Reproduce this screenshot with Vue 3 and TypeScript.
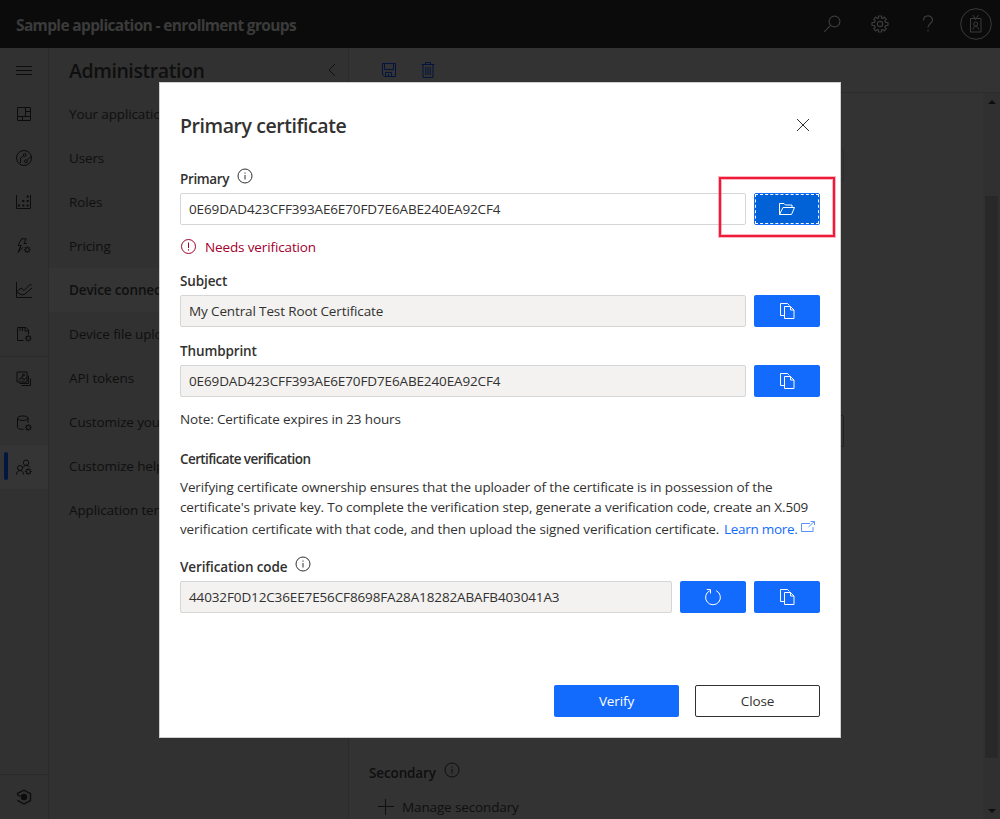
<script setup lang="ts">
interface RailIcon {
  name: string
  d: string
  fill?: string
  gear?: [number, number]
  divider?: boolean
  active?: boolean
}

const rail: RailIcon[] = [
  { name: 'dashboard', d: 'M1.5 1.5h13v13h-13zM1.5 10.5h13M9.5 1.5v9M9.5 5.5h5M6.5 10.5v4' },
  {
    name: 'devices',
    d: 'M8 .5a7.5 7.5 0 1 0 0 15a7.5 7.5 0 1 0 0-15M8.7 3.6a1.4 1.4 0 1 0 0 2.8a1.4 1.4 0 1 0 0-2.8M10 9.8a1.5 1.5 0 1 0 0 3a1.5 1.5 0 1 0 0-3M7.5 6L4.5 8.3V13M11.2 10L15 6.5',
  },
  {
    name: 'metrics',
    d: 'M.5 1v13.5h14V1',
    fill: 'M2 10.5h2v2h-2zM6.3 10.5h2v2h-2zM10.7 10.5h2v2h-2zM6.3 6h2v2h-2zM10.7 6h2v2h-2zM10.7 1.5h2v2h-2z',
  },
  { name: 'rules', d: 'M8 5.500h3M5.500.8h4.700L8 5.500M5.500.8L2 7.500h3L2 14.500l5-5.200M5 7.500L3 12', gear: [11.3, 11.7] },
  { name: 'analytics', d: 'M.5 0v15.5H16M1 9.500L5 6l3 2.500L14.500 2l1.500 1.500M1 10.500l5 2.500 3-1 7-6' },
  { name: 'jobs', d: 'M7.5 14.5h-6v-13H10L12.5 4v4.5M4 2v3M6.5 2v3M9 2v3h3', gear: [12.3, 12.3], divider: true },
  {
    name: 'templates',
    d: 'M1 1h10v10H1zM12.5 4.5v8h-9M14.5 7.5v7h-9M3 9.5l2-3 2-2M7.5 3a1 1 0 1 0 0 2a1 1 0 1 0 0-2M5 7h2v2.5M8 9l3-3',
  },
  {
    name: 'export',
    d: 'M1.5 3.2c0-3 10.5-3 10.5 0s-10.5 3-10.5 0v9c0 1.5 3 2.3 6 2.2M12 3.2v4.500',
    gear: [12.3, 12.5],
  },
  {
    name: 'administration',
    d: 'M10 1a2.7 2.7 0 1 0 0 5.4a2.7 2.7 0 1 0 0-5.4M4 6.5a2.5 2.5 0 1 0 0 5a2.5 2.5 0 1 0 0-5M.5 15.5c0-5.3 7-5.3 7 0M7 8.5c1-2.5 5.5-2.7 7-.3',
    gear: [12.3, 12.5],
    active: true,
  },
]

const sections: { label: string; active?: boolean }[] = [
  { label: 'Your application' },
  { label: 'Users' },
  { label: 'Roles' },
  { label: 'Pricing' },
  { label: 'Device connect', active: true },
  { label: 'Device file upload' },
  { label: 'API tokens' },
  { label: 'Customize your' },
  { label: 'Customize help' },
  { label: 'Application tem' },
]

const thumbprint = '0E69DAD423CFF393AE6E70FD7E6ABE240EA92CF4'
const code = '44032F0D12C36EE7E56CF8698FA28A18282ABAFB403041A3'

const gearTeeth = [0, 45, 90, 135, 180, 225, 270, 315]
</script>

<template>
  <div class="app">
    <header class="top">
      <span class="top-title">Sample application - enrollment groups</span>
      <svg class="i18 search" viewBox="0 0 18 18"><circle cx="11.500" cy="6.500" r="5.400" /><path d="M7.600 10.400L1.200 16.800" /></svg>
      <svg class="i18 cog" viewBox="0 0 18 18">
        <path d="M7.500 1h3v2l1.200.5 1.500-1.400 2.100 2.100-1.400 1.500.6 1.800H17v3h-2.500l-.6 1.800 1.400 1.500-2.100 2.100-1.500-1.400-1.200.5v2h-3v-2l-1.200-.5-1.500 1.400-2.100-2.100 1.400-1.500-.6-1.800H1v-3h2.500l.6-1.800-1.400-1.500 2.100-2.100 1.500 1.400L7.500 3z" />
        <circle cx="9" cy="9" r="2.700" />
      </svg>
      <svg class="i18 help" viewBox="0 0 18 18"><path d="M4.500 5.500c0-6 9-6 9-.5 0 3.500-4.500 3.500-4.500 7.500M9 14.800v1.700" /></svg>
      <svg class="avatar" viewBox="0 0 32 32">
        <circle cx="16" cy="16" r="15.300" />
        <path d="M10.500 10.500h10.500v13.500h-10.500zM13 7l2.500 4.500L18.500 7M13 21.500c0-4 5.500-4 5.500 0" />
        <circle cx="15.700" cy="16" r="2" />
      </svg>
    </header>

    <div class="body">
      <nav class="rail">
        <div class="rail-item menu">
          <svg class="i16" viewBox="0 0 16 16"><path d="M0 4.500h16M0 8.500h16M0 12.500h16" /></svg>
        </div>
        <div
          v-for="r in rail"
          :key="r.name"
          class="rail-item"
          :class="{ divider: r.divider, active: r.active }"
        >
          <svg class="i16" viewBox="0 0 16 16">
            <path :d="r.d" />
            <path v-if="r.fill" class="solid" :d="r.fill" />
            <g v-if="r.gear" :transform="`translate(${r.gear[0]} ${r.gear[1]})`">
              <circle r="2" />
              <path v-for="t in gearTeeth" :key="t" d="M0-2.200V-3.400" :transform="`rotate(${t})`" />
            </g>
          </svg>
        </div>
        <div class="rail-foot">
          <svg class="i16" viewBox="0 0 16 16">
            <path class="thick" d="M1.500 6V4.500L8 1.200l6.500 3.500v6.800L8 15l-6.500-3.600M1.500 6.200l3 1" />
            <circle class="solid" cx="8" cy="8" r="3.200" />
          </svg>
        </div>
      </nav>

      <aside class="side">
        <div class="side-head">
          <h1>Administration</h1>
          <svg class="chev" viewBox="0 0 8 14"><path d="M7 1L1 7l6 6" /></svg>
        </div>
        <a v-for="s in sections" :key="s.label" class="side-item" :class="{ active: s.active }">{{ s.label }}</a>
      </aside>

      <main class="main">
        <div class="toolbar">
          <svg class="i16" viewBox="0 0 16 16"><path d="M1.500 1.500h13v13H3.500l-2-2zM3.500 1.500v6h9v-6M4.500 14.500v-4h6v4M7.500 12v2" /></svg>
          <svg class="i16" viewBox="0 0 16 16"><path d="M1.500 2.500h13M5.500 2.500v-2h5v2M3 2.500v13h10v-13M5.800 5v8M8 5v8M10.200 5v8" /></svg>
        </div>
        <div class="content">
          <div class="form">
            <div class="box first"></div>
            <div class="box second"></div>
            <div class="sec-label">
              <span>Secondary</span>
              <svg class="i16" viewBox="0 0 16 16"><circle cx="8" cy="8" r="7" /><path d="M8 7v4.500M8 4.500v1.200" /></svg>
            </div>
            <div class="manage">
              <svg class="i16" viewBox="0 0 16 16"><path d="M0 7.500h16M7.500 0v16" /></svg>
              <span>Manage secondary</span>
            </div>
          </div>
          <div class="scroll">
            <svg class="arrow" viewBox="0 0 8 4"><path d="M0 4l4-4 4 4z" /></svg>
            <div class="thumb"></div>
            <svg class="arrow" viewBox="0 0 8 4"><path d="M0 0l4 4 4-4z" /></svg>
          </div>
        </div>
      </main>
    </div>

    <div class="overlay">
      <section class="modal" role="dialog">
        <div class="modal-head">
          <h2>Primary certificate</h2>
          <svg class="close" viewBox="0 0 14 14"><path d="M1 1l12 12M13 1L1 13" /></svg>
        </div>

        <div class="label">
          <span class="l-primary">Primary</span>
          <svg class="info" viewBox="0 0 16 16"><circle cx="8" cy="8" r="7" /><path d="M8 7v4.500M8 4.500v1.200" /></svg>
        </div>
        <div class="row">
          <div class="field white">{{ thumbprint }}</div>
          <button class="btn focus">
            <svg class="i18" viewBox="0 0 18 18"><path d="M1.500 14.500h12l3-7H5l-3.500 7V3.500h4.500l1.500 1.500h6.500V7.500" /></svg>
            <i class="ring"></i>
            <i class="callout"></i>
          </button>
        </div>
        <div class="error">
          <svg class="i16" viewBox="0 0 16 16"><circle cx="8.500" cy="7.500" r="7" /><path d="M8.500 3.500v5.500M8.500 10.200v1.300" /></svg>
          <span>Needs verification</span>
        </div>

        <div class="label"><span>Subject</span></div>
        <div class="row">
          <div class="field">My Central Test Root Certificate</div>
          <button class="btn">
            <svg class="i16" viewBox="0 0 16 16"><path d="M5.500 12.500h-4v-12h7L10.500 2.500M5.500 3.500h6l3.500 3.500v8.500H5.500zM11.500 3.500V7H15" /></svg>
          </button>
        </div>

        <div class="label gap"><span>Thumbprint</span></div>
        <div class="row">
          <div class="field">{{ thumbprint }}</div>
          <button class="btn">
            <svg class="i16" viewBox="0 0 16 16"><path d="M5.500 12.500h-4v-12h7L10.500 2.500M5.500 3.500h6l3.500 3.500v8.500H5.500zM11.500 3.500V7H15" /></svg>
          </button>
        </div>

        <p class="note">Note: Certificate expires in 23 hours</p>
        <h3>Certificate verification</h3>
        <div class="para">
          <div class="line">Verifying certificate ownership ensures that the uploader of the certificate is in possession of the</div>
          <div class="line">certificate's private key. To complete the verification step, generate a verification code, create an X.509</div>
          <div class="line last">
            <span>verification certificate with that code, and then upload the signed verification certificate.</span>
            <a class="learn">Learn more.</a>
            <svg class="ext" viewBox="0 0 14 12"><path d="M9 2.500H.5v8h11.500V6M7.500 6L13 .8M9.500.5h4v3.500" /></svg>
          </div>
        </div>

        <div class="label code-label">
          <span>Verification code</span>
          <svg class="info" viewBox="0 0 16 16"><circle cx="8" cy="8" r="7" /><path d="M8 7v4.500M8 4.500v1.200" /></svg>
        </div>
        <div class="row">
          <div class="field">{{ code }}</div>
          <button class="btn">
            <svg class="i18 refresh" viewBox="0 0 18 18"><path d="M5.800 2.700a7.400 7.400 0 1 0 6.400 0M2.700 1.500H6.500V5.500" /></svg>
          </button>
          <button class="btn">
            <svg class="i16" viewBox="0 0 16 16"><path d="M5.500 12.500h-4v-12h7L10.500 2.500M5.500 3.500h6l3.500 3.500v8.500H5.500zM11.500 3.500V7H15" /></svg>
          </button>
        </div>

        <div class="actions">
          <button class="btn wide primary">Verify</button>
          <button class="btn wide outline">Close</button>
        </div>
      </section>
    </div>
  </div>
</template>

<style>
body {
  margin: 0;
  overflow: hidden;
  background: #323232;
}
</style>

<style scoped>
* {
  box-sizing: border-box;
}
.app {
  position: relative;
  width: 1000px;
  height: 819px;
  overflow: hidden;
  display: flex;
  flex-direction: column;
  background: #323232;
  color: #0f0f0f;
  font: 13.5px/20px "Open Sans", "Noto Sans", sans-serif;
  letter-spacing: -0.128px;
  white-space: nowrap;
}
svg {
  flex: none;
  display: block;
  fill: none;
  stroke: currentColor;
  stroke-width: 1;
}
.i16 { width: 16px; height: 16px; }
.i18 { width: 18px; height: 18px; }
.solid { fill: currentColor; stroke: none; }
.thick { stroke-width: 1.3; }
h1, h2, h3, p { margin: 0; }

.top {
  flex: none;
  height: 48px;
  display: flex;
  align-items: center;
  padding: 0 8px 0 16px;
  background: #0b0b0b;
  color: #3b3b3b;
}
.top-title {
  flex: 1;
  font-size: 15.5px;
  font-weight: 700;
  letter-spacing: -0.65px;
  padding-top: 1px;
}
.search { stroke-width: 1.2; }
.cog { margin-left: 30px; stroke-width: 1.2; }
.help { margin-left: 30px; stroke-width: 1.2; }
.avatar { width: 32px; height: 32px; margin-left: 23px; }

.body { flex: 1; display: flex; min-height: 0; }
.rail {
  width: 49px;
  flex: none;
  display: flex;
  flex-direction: column;
  background: #313131;
  border-right: 1px solid #2b2b2b;
  color: #0c0c0c;
}
.rail-item {
  position: relative;
  height: 44px;
  flex: none;
  display: flex;
  align-items: center;
  padding-left: 16px;
}
.rail-item.divider { border-bottom: 1px solid #2a2a2a; height: 45px; }
.rail-item.active { background: #353535; }
.rail-item.active::before {
  content: "";
  position: absolute;
  left: 4px;
  top: 7px;
  width: 4px;
  height: 28px;
  border-radius: 2px;
  background: #011740;
}
.rail-foot {
  margin-top: auto;
  height: 45px;
  border-top: 1px solid #2a2a2a;
  display: flex;
  align-items: center;
  padding-left: 16px;
}
.side {
  width: 300px;
  flex: none;
  border-right: 1px solid #2b2b2b;
  background: #313131;
  overflow: hidden;
}
.side-head {
  height: 44px;
  padding: 2px 12px 0 20px;
  display: flex;
  align-items: center;
  justify-content: space-between;
}
.side-head h1 { font-size: 19.5px; font-weight: 600; line-height: 28px; letter-spacing: -0.42px; }
.chev { width: 8px; height: 14px; margin-top: -2px; }
.side-item {
  display: flex;
  align-items: center;
  height: 44px;
  padding-left: 20px;
}
.side-item.active { background: #343434; font-weight: 600; }

.main { flex: 1; display: flex; flex-direction: column; background: #333; }
.toolbar {
  height: 45px;
  flex: none;
  display: flex;
  align-items: center;
  gap: 23px;
  padding-left: 32px;
  border-bottom: 1px solid #2b2b2b;
  color: #04153d;
}
.content { flex: 1; display: flex; min-height: 0; }
.form { flex: 1; padding: 56px 0 0 20px; }
.box { width: 475px; height: 32px; border: 1px solid #2b2b2b; border-radius: 2px; }
.box.second { margin-top: 234px; border-color: #202020; }
.sec-label { display: flex; gap: 8px; margin-top: 314px; height: 24px; font-weight: 600; }
.sec-label span { padding-top: 2px; }
.sec-label svg { margin-top: 1px; }
.manage { display: flex; align-items: center; gap: 8px; padding-left: 9px; margin-top: 12px; height: 20px; }
.scroll {
  width: 17px;
  background: #303030;
  display: flex;
  flex-direction: column;
  align-items: center;
  padding: 7px 2px 6px;
}
.arrow { width: 8px; height: 4px; fill: #0e0e0e; stroke: none; }
.thumb { width: 13px; height: 562px; margin: 92px 0 auto; background: #282828; }

.overlay {
  position: absolute;
  inset: 0;
  display: flex;
  justify-content: center;
  align-items: flex-start;
  padding-top: 82px;
}
.modal {
  width: 682px;
  height: 656px;
  padding: 0 20px;
  background: #fff;
  border: 1px solid #cfcfcf;
  color: #323130;
  display: flex;
  flex-direction: column;
}
.modal-head {
  display: flex;
  justify-content: space-between;
  align-items: center;
  height: 28px;
  margin-top: 29px;
}
.modal-head h2 { font-size: 19.5px; line-height: 28px; font-weight: 600; letter-spacing: -0.44px; }
.close { width: 14px; height: 14px; margin: -2px 10px 0 0; }
.label {
  height: 28px;
  display: flex;
  gap: 8px;
  font-weight: 600;
  padding-top: 4px;
}
.l-primary { letter-spacing: -0.36px; }
.modal-head + .label { margin-top: 25px; }
.label.gap { margin-top: 10px; }
.info { width: 16px; height: 16px; margin-top: -1px; }
.row { display: flex; gap: 8px; height: 32px; flex: none; }
.field {
  flex: 1;
  padding: 0 8px;
  line-height: 30px;
  border: 1px solid #d6d6d6;
  border-radius: 2px;
  background: #f3f2f1;
}
.field.white { background: #fff; }
.btn {
  position: relative;
  width: 66px;
  height: 32px;
  padding: 0;
  display: flex;
  align-items: center;
  justify-content: center;
  border: 0;
  border-radius: 2px;
  background: #136bfd;
  color: #fff;
  font: inherit;
  letter-spacing: inherit;
}
.btn.focus { background: #0062d6; border: 1px solid #136bfd; }
.ring { position: absolute; inset: 0; border: 1px dashed #fff; }
.callout {
  position: absolute;
  left: -36px;
  top: -17px;
  width: 116px;
  height: 60px;
  border: 2px solid #f01b39;
  box-shadow: 0 0 0 1px #f01b3950, inset 0 0 0 1px #f01b3950;
}
.error { display: flex; align-items: center; gap: 9px; height: 20px; margin: 12px 0 10px; color: #a4002c; }
.note { height: 20px; margin-top: 12px; }
h3 {
  height: 20px;
  margin-top: 20px;
  font-size: 13.5px;
  line-height: 20px;
  font-weight: 600;
  letter-spacing: -0.6px;
}
.para { margin-top: 8px; }
.line { height: 20px; display: flex; align-items: center; }
.line.last { height: 24px; }
.learn { color: #136bfd; margin-left: 5px; letter-spacing: -0.3px; }
.ext { width: 14px; height: 12px; margin: -5px 0 0 4px; color: #5a92fb; }
.code-label { margin-top: 12px; }
.actions { display: flex; justify-content: flex-end; gap: 16px; margin-top: 72px; }
.wide { width: 125px; }
.primary { font-weight: 500; }
.outline { background: #fff; color: #323130; border: 1px solid #323130; }
</style>
